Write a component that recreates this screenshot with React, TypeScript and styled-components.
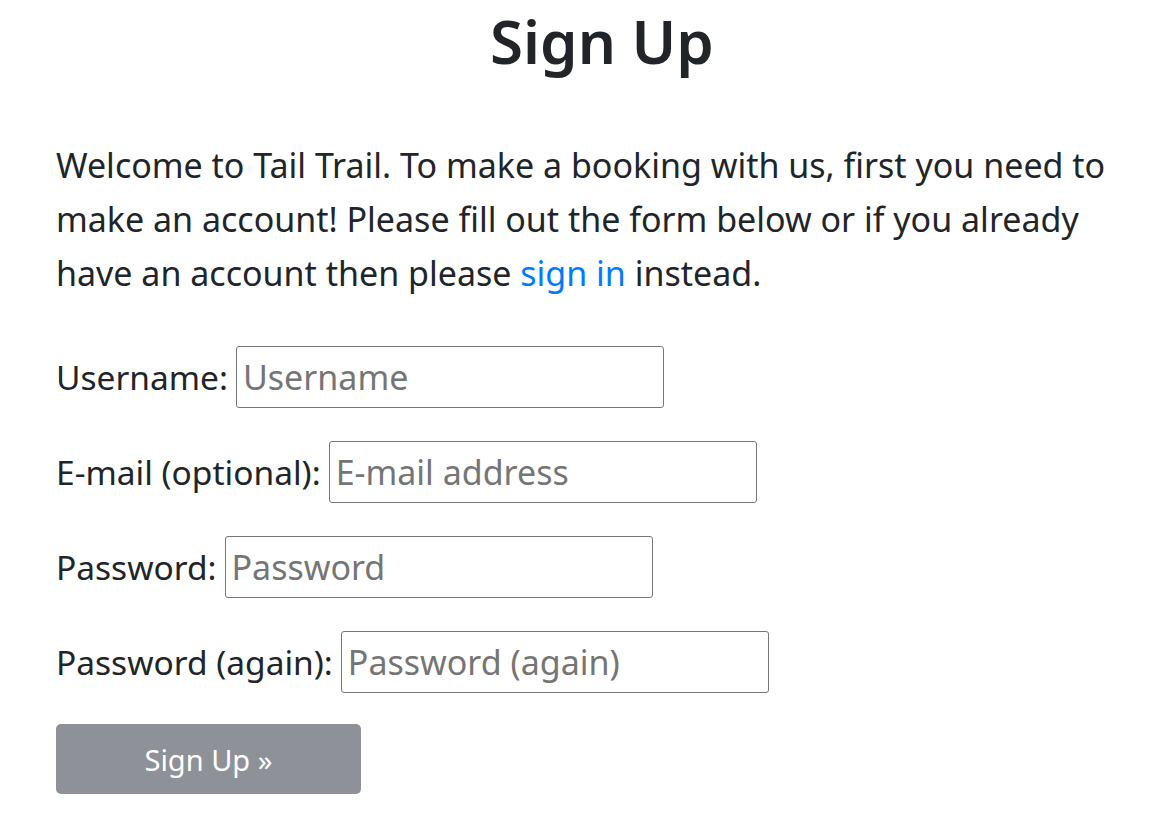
import * as React from 'react';
import styled, { createGlobalStyle } from 'styled-components';

const GlobalStyle = createGlobalStyle`
  html, body {
    margin: 0;
    background: #fff;
  }
  body {
    font-family: "Noto Sans", "Open Sans", sans-serif;
    color: #212529;
  }
`;

const Page = styled.main`
  padding: 0 5px 0 56px;
`;

const Title = styled.h2`
  margin: 0;
  font-size: 60px;
  font-weight: 600;
  line-height: 82px;
  text-align: center;
`;

const Intro = styled.p`
  margin: 56px 0 0;
  font-size: 34px;
  line-height: 54px;
`;

const Link = styled.a`
  color: #007bff;
  text-decoration: none;
`;

const Form = styled.form`
  display: flex;
  flex-direction: column;
  align-items: flex-start;
  gap: 33px;
  margin-top: 46px;
`;

const Row = styled.div`
  display: flex;
  align-items: center;
  gap: 8px;
`;

const Label = styled.label`
  font-size: 33.5px;
  line-height: 62px;
`;

const Input = styled.input`
  box-sizing: border-box;
  width: 428px;
  height: 62px;
  padding: 0 6px;
  border: 1px solid #767676;
  border-radius: 3px;
  font-family: inherit;
  font-size: 34px;
  color: #212529;
  background: #fff;

  ::placeholder {
    color: #757575;
  }
`;

const Submit = styled.button`
  box-sizing: border-box;
  width: 305px;
  height: 70px;
  margin-top: -2px;
  border: none;
  border-radius: 5px;
  background: #8f9199;
  color: #fff;
  font-family: inherit;
  font-size: 29px;
  cursor: default;
`;

const fields = [
  { label: 'Username:', placeholder: 'Username', type: 'text' },
  { label: 'E-mail (optional):', placeholder: 'E-mail address', type: 'email' },
  { label: 'Password:', placeholder: 'Password', type: 'password' },
  { label: 'Password (again):', placeholder: 'Password (again)', type: 'password' },
];

export default function App() {
  return (
    <>
      <GlobalStyle />
      <Page>
        <Title>Sign Up</Title>
        <Intro>
          Welcome to Tail Trail. To make a booking with us, first you need to make an account!
          Please fill out the form below or if you already have an account then please{' '}
          <Link href="#">sign in</Link> instead.
        </Intro>
        <Form onSubmit={(e) => e.preventDefault()}>
          {fields.map((f) => (
            <Row key={f.label}>
              <Label>{f.label}</Label>
              <Input type={f.type === 'password' ? 'text' : f.type} placeholder={f.placeholder} />
            </Row>
          ))}
          <Submit type="submit" disabled>
            Sign Up »
          </Submit>
        </Form>
      </Page>
    </>
  );
}
